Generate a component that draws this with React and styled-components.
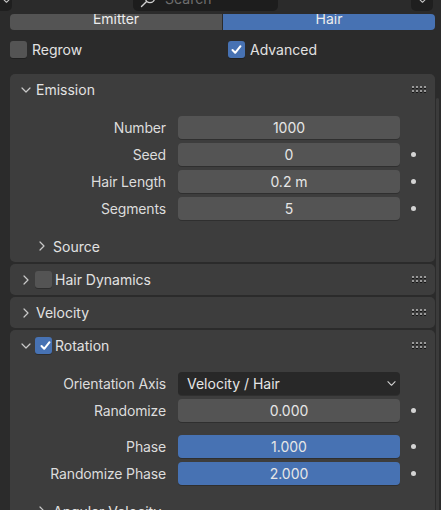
import React from 'react'
import { styled, createGlobalStyle } from 'styled-components'

const GlobalStyle = createGlobalStyle`
    html, body {
        margin: 0;
        padding: 0;
        background: #2b2b2b;
    }
    body {
        font-family: Inter, "Noto Sans", sans-serif;
        font-size: 14px;
        color: #e2e2e2;
    }
`

const Chevron = ({ dir = 'right', size = 10, color = '#c9c9c9' }) => {
    const pts = dir === 'down' ? '1,3 5,7 9,3' : '3,1 7,5 3,9'
    return (
        <svg width={size} height={size} viewBox="0 0 10 10">
            <polyline points={pts} fill="none" stroke={color} strokeWidth="1.2" strokeLinecap="round" strokeLinejoin="round" />
        </svg>
    )
}

const Check = () => (
    <svg width="13" height="13" viewBox="0 0 13 13">
        <polyline points="2.5,7 5.2,9.8 10.5,3.2" fill="none" stroke="#fff" strokeWidth="2" strokeLinecap="round" strokeLinejoin="round" />
    </svg>
)

const DragHandle = () => (
    <svg width="15" height="8" viewBox="0 0 15 8">
        {[0, 4, 8, 12].map((x) =>
            [0, 4].map((y) => (
                <g key={`${x}-${y}`}>
                    <rect x={x} y={y + 1} width="2" height="2" fill="#151515" />
                    <rect x={x} y={y} width="2" height="2" fill="#9a9a9a" />
                </g>
            ))
        )}
    </svg>
)

const SearchGlass = () => (
    <svg width="16" height="16" viewBox="0 0 16 16">
        <circle cx="10" cy="6" r="4.6" fill="none" stroke="#cfcfcf" strokeWidth="1.3" />
        <line x1="6.6" y1="9.4" x2="1.5" y2="14.5" stroke="#cfcfcf" strokeWidth="1.4" strokeLinecap="round" />
    </svg>
)

const App = () => {
    return (
        <>
            <GlobalStyle />
            <Screen>
                <Header>
                    <HeadButton $width={12} $radius="0 0 5px 0">
                        <Chevron dir="down" size={9} />
                    </HeadButton>
                    <SearchBox>
                        <SearchGlass />
                        <span>Search</span>
                    </SearchBox>
                    <HeadButton $width={22} $radius="0 0 5px 5px" $push>
                        <Chevron dir="down" size={9} />
                    </HeadButton>
                </Header>

                <Content>
                    <Segmented>
                        <SegButton>
                            <span>Emitter</span>
                        </SegButton>
                        <SegButton $active>
                            <span>Hair</span>
                        </SegButton>
                    </Segmented>

                    <OptionRow>
                        <CheckLabel>
                            <CheckBox />
                            Regrow
                        </CheckLabel>
                        <CheckLabel>
                            <CheckBox $checked><Check /></CheckBox>
                            Advanced
                        </CheckLabel>
                    </OptionRow>

                    <Panels>
                        <Panel $pad={2}>
                            <PanelHeader>
                                <ChevSlot><Chevron dir="down" /></ChevSlot>
                                <HeaderTitle>Emission</HeaderTitle>
                                <DragHandle />
                            </PanelHeader>
                            <Fields>
                                <FieldRow label="Number" value="1000" />
                                <FieldRow label="Seed" value="0" dot />
                                <FieldRow label="Hair Length" value="0.2 m" dot />
                                <FieldRow label="Segments" value="5" dot />
                            </Fields>
                            <SubHeader>
                                <ChevSlot><Chevron /></ChevSlot>
                                <HeaderTitle>Source</HeaderTitle>
                            </SubHeader>
                        </Panel>

                        <Panel>
                            <PanelHeader>
                                <ChevSlot><Chevron /></ChevSlot>
                                <HeaderCheck />
                                <HeaderTitle $afterCheck>Hair Dynamics</HeaderTitle>
                                <DragHandle />
                            </PanelHeader>
                        </Panel>

                        <Panel>
                            <PanelHeader>
                                <ChevSlot><Chevron /></ChevSlot>
                                <HeaderTitle>Velocity</HeaderTitle>
                                <DragHandle />
                            </PanelHeader>
                        </Panel>

                        <Panel>
                            <PanelHeader>
                                <ChevSlot><Chevron dir="down" /></ChevSlot>
                                <HeaderCheck $checked><Check /></HeaderCheck>
                                <HeaderTitle $afterCheck>Rotation</HeaderTitle>
                                <DragHandle />
                            </PanelHeader>
                            <Fields>
                                <Row>
                                    <RowLabel>Orientation Axis</RowLabel>
                                    <Dropdown>
                                        <span>Velocity / Hair</span>
                                        <Chevron dir="down" size={9} color="#d6d6d6" />
                                    </Dropdown>
                                    <Decor />
                                </Row>
                                <FieldRow label="Randomize" value="0.000" dot />
                                <Spacer />
                                <FieldRow label="Phase" value="1.000" dot blue />
                                <FieldRow label="Randomize Phase" value="2.000" dot blue />
                            </Fields>
                            <SubHeader>
                                <ChevSlot><Chevron /></ChevSlot>
                                <HeaderTitle>Angular Velocity</HeaderTitle>
                            </SubHeader>
                        </Panel>
                    </Panels>
                </Content>

                <ScrollThumb />
            </Screen>
        </>
    )
}

const FieldRow = ({ label, value, dot, blue }) => (
    <Row>
        <RowLabel>{label}</RowLabel>
        <NumField $blue={blue}>{value}</NumField>
        <Decor>{dot && <Dot />}</Decor>
    </Row>
)

const Screen = styled.div`
    position: relative;
    width: 441px;
    height: 510px;
    overflow: hidden;
    background: #2b2b2b;
`

const Header = styled.div`
    height: 13px;
    display: flex;
    align-items: flex-end;
    overflow: hidden;
`

const HeadButton = styled.div`
    width: ${(p) => p.$width}px;
    height: 22px;
    margin-top: -11px;
    margin-bottom: 2px;
    margin-left: ${(p) => (p.$push ? 'auto' : '0')};
    margin-right: ${(p) => (p.$push ? '8px' : '0')};
    background: #1f1f1f;
    border-radius: ${(p) => p.$radius};
    display: flex;
    align-items: flex-end;
    justify-content: center;
    padding-bottom: 6px;
    box-sizing: border-box;
`

const SearchBox = styled.div`
    width: 145px;
    height: 22px;
    margin-left: 121px;
    margin-bottom: 2px;
    background: #1d1d1d;
    border-radius: 5px;
    box-sizing: border-box;
    padding: 0 7px;
    display: flex;
    align-items: flex-end;
    gap: 9px;
    color: #6e6e6e;
    line-height: 17px;
    span {
        margin-bottom: 4px;
    }
    svg {
        margin-bottom: 3px;
    }
`

const Content = styled.div`
    padding: 1px 6px 0 10px;
`

const Segmented = styled.div`
    display: flex;
    gap: 1px;
    height: 16px;
`

const SegButton = styled.div`
    flex: 1;
    overflow: hidden;
    text-align: center;
    line-height: 9px;
    color: #ececec;
    background: ${(p) => (p.$active ? '#4772b3' : '#545454')};
    &:first-child {
        border-radius: 4px 0 0 4px;
    }
    &:last-child {
        border-radius: 0 4px 4px 0;
    }
`

const OptionRow = styled.div`
    margin-top: 11px;
    display: grid;
    grid-template-columns: 1fr 1fr;
    column-gap: 11px;
`

const CheckLabel = styled.label`
    display: flex;
    align-items: center;
    gap: 5px;
    height: 17px;
    color: #e2e2e2;
`

const CheckBox = styled.span`
    width: 17px;
    height: 17px;
    box-sizing: border-box;
    border-radius: 3px;
    background: ${(p) => (p.$checked ? '#4772b3' : '#545454')};
    box-shadow: 0 1px 0 rgba(0, 0, 0, 0.25);
    display: flex;
    align-items: center;
    justify-content: center;
    flex-shrink: 0;
`

const HeaderCheck = styled(CheckBox)`
    margin-left: 4px;
`

const Panels = styled.div`
    margin-top: 16px;
    display: flex;
    flex-direction: column;
    gap: 2px;
`

const Panel = styled.section`
    background: #3d3d3d;
    border-radius: 5px;
    padding-bottom: ${(p) => p.$pad || 0}px;
`

const PanelHeader = styled.div`
    height: 31px;
    display: flex;
    align-items: center;
    padding: 0 8px 0 9px;
    svg:last-child {
        margin-left: auto;
    }
`

const SubHeader = styled.div`
    height: 28px;
    margin-top: 12px;
    display: flex;
    align-items: center;
    padding-left: 26px;
`

const ChevSlot = styled.span`
    width: 12px;
    display: flex;
    justify-content: center;
    align-items: center;
`

const HeaderTitle = styled.span`
    margin-left: ${(p) => (p.$afterCheck ? 3 : 5)}px;
    color: #e2e2e2;
`

const Fields = styled.div`
    padding-top: 11px;
    display: flex;
    flex-direction: column;
    gap: 4px;
`

const Row = styled.div`
    display: flex;
    align-items: center;
    height: 23px;
`

const RowLabel = styled.span`
    width: 156px;
    margin-right: 12px;
    text-align: right;
    color: #dcdcdc;
    white-space: nowrap;
    letter-spacing: -0.15px;
`

const NumField = styled.div`
    width: 222px;
    height: 23px;
    line-height: 23px;
    border-radius: 4px;
    text-align: center;
    color: #e6e6e6;
    background: ${(p) => (p.$blue ? '#4772b3' : '#545454')};
    box-shadow: 0 1px 0 rgba(0, 0, 0, 0.22);
`

const Dropdown = styled.div`
    width: 222px;
    height: 23px;
    box-sizing: border-box;
    padding: 0 4px 0 9px;
    border-radius: 4px;
    background: #282828;
    color: #e6e6e6;
    display: flex;
    align-items: center;
    justify-content: space-between;
    box-shadow: 0 1px 0 rgba(0, 0, 0, 0.22);
`

const Decor = styled.span`
    width: 26px;
    display: flex;
    justify-content: center;
`

const Dot = styled.span`
    width: 5px;
    height: 5px;
    border-radius: 50%;
    background: #d4d4d4;
`

const Spacer = styled.div`
    height: 5px;
`

const ScrollThumb = styled.div`
    position: absolute;
    right: 2px;
    top: 98px;
    bottom: 0;
    width: 3px;
    border-radius: 2px 2px 0 0;
    background: #3b3b3b;
`

export default App
